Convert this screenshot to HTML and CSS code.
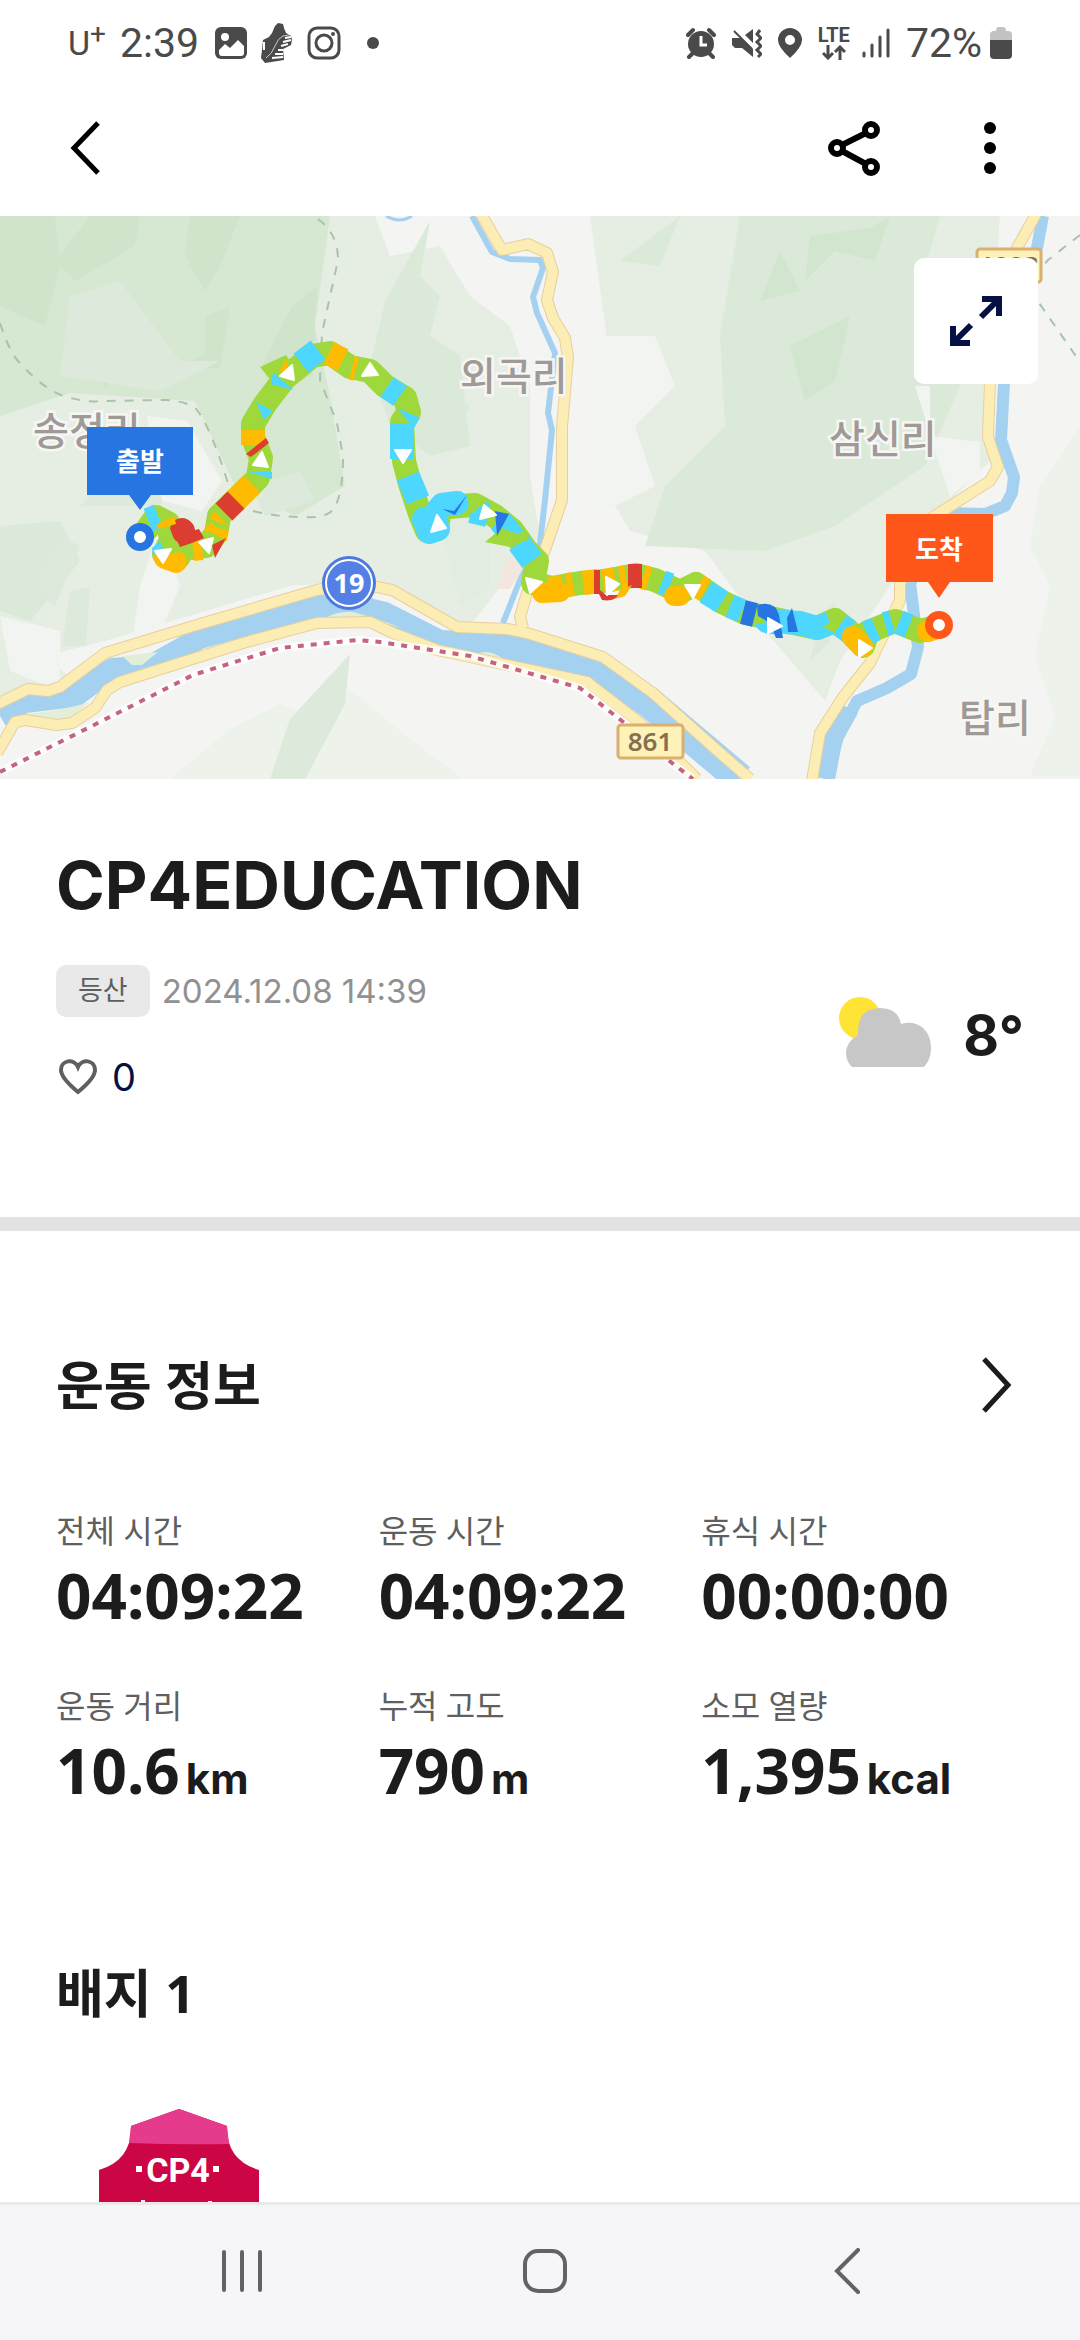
FILE: index.html
```html
<!DOCTYPE html>
<html lang="ko">
<head>
    <meta charset="UTF-8">
    <meta name="viewport" content="width=device-width, initial-scale=1.0">
    <title>CP4EDUCATION</title>
    <link rel="stylesheet" href="styles.css">
</head>
<body>
    <div class="status-bar">
        <div class="status-left">
            <span class="carrier">U<sup>+</sup></span>
            <span class="clock">2:39</span>
            <svg class="ic-photo" width="32" height="32" viewBox="0 0 32 32">
                <rect width="32" height="32" rx="6" fill="#4a4a4a"/>
                <circle cx="10" cy="10" r="4" fill="#fff"/>
                <path d="M4 23l6-6 5 4 8-8 6 6v7q0 3-3 3H7q-3 0-3-3z" fill="#fff"/>
            </svg>
            <svg class="ic-shoe" width="32" height="40" viewBox="0 0 32 40">
                <path d="M14 3l3-3 5 1 1 4 2 5 5 3 1 4-1 5-8 4 1 11-19 3-4-5 1-8 1-10 6-3 3-4z" fill="#4a4a4a"/>
                <path d="M3 19v8M24 15l6-1M22 19l8-2M20 23l7-2M17 27h5M14 31h8M11 35l11-1" fill="none" stroke="#fff" stroke-width="2"/>
                <path d="M5 35q6-4 9-12t8-10l6-1" fill="none" stroke="#ccc"/>
            </svg>
            <svg width="34" height="34" viewBox="0 0 34 34" fill="none" stroke="#4a4a4a" stroke-width="3">
                <rect x="2" y="2" width="30" height="30" rx="8"/>
                <circle cx="17" cy="17" r="8"/>
                <circle cx="26" cy="8" r="2" fill="#4a4a4a" stroke="none"/>
            </svg>
            <span class="more-dot"></span>
        </div>
        <div class="status-right">
            <svg width="30" height="32" viewBox="0 0 30 32">
                <circle cx="15" cy="17" r="13" fill="#4a4a4a"/>
                <path d="M2 8l5-5M28 8l-5-5M3 30l4-4M27 30l-4-4" stroke="#4a4a4a" stroke-width="4" stroke-linecap="round"/>
                <path d="M15 9v9h6" fill="none" stroke="#fff" stroke-width="3"/>
            </svg>
            <svg width="30" height="32" viewBox="0 0 30 32">
                <path d="M0 11h9l12 11v8L10 21H3l-3-3zM13 8l8-6v14z" fill="#4a4a4a"/>
                <path d="M2 4l18 18" stroke="#4a4a4a" stroke-width="2"/>
                <path d="M28 3l-3 4 4 4-4 4 4 4-4 4 4 4-3 3" fill="none" stroke="#4a4a4a" stroke-width="3"/>
            </svg>
            <svg width="24" height="30" viewBox="0 0 24 30">
                <path fill="#4a4a4a" fill-rule="evenodd" d="M12 0a12 12 0 0 1 12 12q0 7-12 18Q0 19 0 12A12 12 0 0 1 12 0zm0 7a5 5 0 1 0 0 10 5 5 0 0 0 0-10z"/>
            </svg>
            <span class="lte">LTE
                <svg width="24" height="15" viewBox="0 0 24 15" fill="none" stroke="#4a4a4a" stroke-width="3">
                    <path d="M6 0v13M1 8l5 5 5-5M18 15V2M13 7l5-5 5 5"/>
                </svg>
            </span>
            <svg class="ic-signal" width="28" height="30" viewBox="0 0 28 30" stroke="#4a4a4a" stroke-width="3" stroke-linecap="round">
                <path d="M2 25v3M10 17v11M18 9v19M26 2v26"/>
            </svg>
            <span class="battery-text">72%</span>
            <svg width="22" height="32" viewBox="0 0 22 32">
                <path d="M0 14V8q0-4 4-4h2q0-4 3-4h4q3 0 3 4h2q4 0 4 4v6z" fill="#c2c2c2"/>
                <path d="M0 13h22v15q0 4-4 4H4q-4 0-4-4z" fill="#4a4a4a"/>
            </svg>
        </div>
    </div>

    <header class="app-bar">
        <button class="icon-btn" aria-label="뒤로">
            <svg width="32" height="56" viewBox="0 0 32 56" fill="none" stroke="#000" stroke-width="5"><path d="M28 3L4 28l24 25"/></svg>
        </button>
        <div class="app-actions">
            <button class="icon-btn" aria-label="공유">
                <svg width="52" height="56" viewBox="0 0 52 56" fill="none" stroke="#000" stroke-width="6">
                    <circle cx="9" cy="28" r="6"/><circle cx="43" cy="10" r="6"/><circle cx="43" cy="47" r="6"/>
                    <path d="M14 25l24-12M14 31l24 13"/>
                </svg>
            </button>
            <button class="icon-btn" aria-label="더보기">
                <svg width="12" height="54" viewBox="0 0 12 54"><circle cx="6" cy="7" r="6"/><circle cx="6" cy="27" r="6"/><circle cx="6" cy="47" r="6"/></svg>
            </button>
        </div>
    </header>

    <main>
        <div class="map">
            <svg class="map-canvas" viewBox="0 0 1080 563">
                <rect width="1080" height="563" fill="#f4f5f3"/>

                <!-- 산 / 녹지 -->
                <g fill="#e6eee4">
                    <path d="M0 0H375l15 40 50-10 30 50 40 30 20 60 0 90 10 60-70 90-95-45-85 5-185 55-60 15L80 470 0 485z"/>
                    <path d="M590 0H1000l-10 160 5 80-45 45-50 70-60 90-15 40-60-70-60-80-75-20-30-50 10-120z"/>
                </g>
                <path d="M170 563l60-50 50-25 40 15 30-30 60 50 80 60zM1080 210l-40 60-10 60 20 40-15 70 20 60-25 60h55z" fill="#edf2eb"/>
                <path d="M0 0h330l-15 110 15 70 15 90-50 30-60-30-40-85-125-8L0 200z" fill="#d6e7d2"/>
                <g fill="#dbe9d8">
                    <path d="M430 5l-45 80-15 65 20 60 40 30 40-10-10-90-30-20 10-40-20-20z"/>
                    <path d="M740 0h200l-20 70 40 100-35 80-90 60-70 25-120-5 20-60 60-60-5-90z"/>
                    <path d="M620 45l60-45-20 50zM440 195l30-8-10 35-20 8zM0 310l60-5 20 40-50 60-30-10z"/>
                </g>
                <path d="M440 280h50v90l-30 20-15-60z" fill="#e2ece0"/>
                <g fill="#cfe4ca">
                    <path d="M0 0h55l5 50-15 60L0 90zM90 0h50l-5 30-60 35-20-20zM190 0h50l-20 50-15 25-20-35zM205 100l25-8-10 60h-40l25-15zM105 110l25-8 5 30-30 40-12-30zM262 150l30-60 25-20-5 90-40 20z"/>
                </g>
                <g fill="#d2e5ce">
                    <path d="M810 20l60-8 20-12-15 45-40-10-30 30zM760 85l40-10-20-40zM790 130l60-30-15 65-30 20z"/>
                </g>
                <g fill="#dde9da">
                    <path d="M250 270l50-15 15 30-50 15zM270 563l20-60 60-65-5 50-40 75zM80 290l50-50 60 10-30 40zM60 320l20 10-25 60-25-20z"/>
                    <path d="M70 80l50-15 60 80 40 0-60 30-100-15zM820 400l15-15-5 40-20 20zM70 375l20-5-4 60H62z"/>
                </g>
                <path d="M147 200l40 5 35 60-20 30-40-10zM140 370l20-60 20 60-25 60-25 10zM585 120h70l20 50-40 40 20 60-60 30-10-20zM0 400l60 15 0 60-50-20zM915 170l15 0 0 50 50 6 0 30-30 25z" fill="#f2f4f1"/>
                <path d="M504 350l13-15 8 15-15 23h-12z" fill="#f3e6df"/>

                <!-- 강 -->
                <g fill="none" stroke="#a5d1f1" stroke-linejoin="round">
                    <path d="M0 500L25 486 75 480 112 453 150 450 200 422 317 390 360 391 385 397 440 425 520 430" stroke-width="22"/>
                    <path d="M500 428L600 452 650 487 720 546 740 563" stroke-width="31"/>
                    <path d="M472 0L492 36 510 43 540 44 543 52 533 81 537 97 555 137 548 197 552 214 545 284 540 327 520 364 503 407" stroke-width="6"/>
                    <path d="M386 0q14 8 26 0" stroke-width="3"/>
                    <path d="M1043 0L1037 32 1005 120 1004 167 1001 224 1014 261 1012 277 1005 290 985 298 950 297 910 367 918 431 911 458 887 472 857 485 838 521 825 563" stroke-width="12"/>
                    <path d="M850 493L834 521 826 563" stroke-width="18"/>
                </g>
                <path d="M122 440l36-4-16 13-10 0zM25 498q40-4 65-12l-25 20zM325 402q20-10 35-4l20 6 22 8-30-8zM477 438q12-6 28 6z" fill="#e2eed8"/>

                <!-- 도로 -->
                <g fill="none" stroke-linejoin="round">
                    <g stroke="#e8cf9d" stroke-width="12">
                        <path d="M-5 489L28 473 48 475 60 471 105 437 200 408 317 374 349 367 377 371 392 374 457 411 507 413 527 417 603 441 653 477 720 537 750 563"/>
                        <path d="M-3 537L15 506 25 504 57 509 72 507 95 492 107 474 120 466 243 427 317 407 370 406 393 417 437 434 493 446 587 466 640 507 697 563"/>
                        <path d="M481 -2L502 34 528 28 547 37 553 56 547 84 553 102 565 122 568 141 562 211 562 284 545 334 527 377 520 401 523 412"/>
                        <path d="M1036 -2L1017 32 995 90 990 167 988 221 998 251 990 265 933 301 900 367 900 384 870 447 843 481 820 517 812 565"/>
                    </g>
                    <g stroke="#fbedb3" stroke-width="10">
                        <path d="M-5 489L28 473 48 475 60 471 105 437 200 408 317 374 349 367 377 371 392 374 457 411 507 413 527 417 603 441 653 477 720 537 750 563"/>
                        <path d="M-3 537L15 506 25 504 57 509 72 507 95 492 107 474 120 466 243 427 317 407 370 406 393 417 437 434 493 446 587 466 640 507 697 563"/>
                        <path d="M481 -2L502 34 528 28 547 37 553 56 547 84 553 102 565 122 568 141 562 211 562 284 545 334 527 377 520 401 523 412"/>
                        <path d="M1036 -2L1017 32 995 90 990 167 988 221 998 251 990 265 933 301 900 367 900 384 870 447 843 481 820 517 812 565"/>
                    </g>
                    <path d="M0 556L80 516 193 459 280 432 357 424 380 426 470 440 580 472 627 509 672 547 693 563" stroke="#fff" stroke-opacity=".8" stroke-width="8"/>
                    <path d="M0 556L80 516 193 459 280 432 357 424 380 426 470 440 580 472 627 509 672 547 693 563" stroke="#c46482" stroke-width="4" stroke-dasharray="6 7"/>
                    <path d="M0 107Q10 138 20 147 45 175 67 181T100 185L167 184Q190 186 197 194 212 214 230 274M253 295Q278 301 300 301 325 303 333 294 343 280 343 241L337 207 320 164 322 117 338 44Q338 14 313 0M1080 19L1048 44 1035 60 1037 84 1080 146" stroke="#a9c2ab" stroke-width="2" stroke-dasharray="9 9"/>
                </g>

                <!-- 지명 -->
                <g class="place">
                    <text x="33" y="229">송정리</text>
                    <text x="460" y="174">외곡리</text>
                    <text x="829" y="237">삼신리</text>
                    <text x="959" y="516">탑리</text>
                </g>
                <g class="road-no">
                    <rect x="618" y="509" width="65" height="33" rx="3"/>
                    <text x="650" y="535">861</text>
                    <rect x="977" y="33" width="64" height="33" rx="3"/>
                    <text x="1009" y="59">1023</text>
                </g>
                <circle cx="349" cy="367" r="27" fill="#4d78dd"/>
                <circle cx="349" cy="367" r="23" fill="#5480e6" stroke="#fff" stroke-width="2"/>
                <text class="route-no" x="349" y="377">19</text>

                <!-- 이동 경로: 속도별 색상 -->
                <g fill="none" stroke-width="24" stroke-linejoin="round">
                    <path stroke="#9fd83a" stroke-linecap="round" d="M148 312L156 301 168 307 172 322 164 338 178 342 188 325 194 332 206 330 216 318 219 300 258 262 261 242 253 222 253 208 265 188 285 162 312 140 330 137 350 151 370 155 385 170 405 182 409 196 402 206 404 245 410 268 420 298 427 315 437 313 440 292 460 290 475 289 495 300 512 314 527 335 537 345 533 367 552 372 580 367 605 365 636 359 655 364 680 376 696 368 722 386 745 397 770 402 817 412 835 404 852 418 863 430 868 416 895 405 920 415 936 411"/>
                    <g stroke="#4dd7ff">
                        <path d="M148 304L158 300M301 147L318 134M387 171L400 180M402 207V243M408 260L418 284"/>
                        <path d="M424 303L429 316 438 313 433 300 442 289 457 287" stroke-linecap="round"/>
                        <path d="M471 295L488 299M500 305L514 322M519 327L532 345M662 366L670 369M706 376L722 386M730 390L742 395"/>
                        <path d="M765 403L785 406 800 407 817 412 830 407M840 409L849 415M867 417L876 413M885 408L892 406M899 406L909 410"/>
                    </g>
                    <g stroke="#ffbb00">
                        <path d="M165 342L176 346" stroke-width="22" stroke-linecap="round"/>
                        <path d="M193 333L202 332M216 317L217 312M232 288L252 268M253 229V214M329 137L343 144M352 152L356 153M548 373L562 372M567 369L573 368M583 367L598 365M603 365L615 363M620 362L626 361M643 361L649 363M698 370L705 374"/>
                        <path d="M542 377L560 376M674 380L680 380" stroke-width="20" stroke-linecap="round"/>
                        <path d="M853 421L862 430M928 415L937 412" stroke-width="22" stroke-linecap="round"/>
                    </g>
                    <g stroke="#db3e30">
                        <path d="M182 314L183 315" stroke-linecap="round"/>
                        <path d="M224 296L236 284M594 366H600M628 360L642 360"/>
                    </g>
                    <path stroke="#2775e2" d="M743 396L755 399"/>
                </g>
                <path fill="#9fd83a" d="M260 151l26-12 16 24-22 12zM485 326l17-14 28 11-20 8zM467 280q10-4 18 7l-14 11zM823 411l20-14-8 20zM157 316l12-6 10 26-15 4z"/>
                <path fill="#4dd7ff" d="M152 332l8-7 4 10-11 4zM256 186l17 9-9 9zM273 156l20 18-22-6zM249 256h23v7zM397 192l23 10-6 10zM755 408l24-2v12q-20 2-24-10z"/>
                <path fill="#ffbb00" d="M156 309l18-9 2 8-17 5zM207 314l20 11v-6l-17-13zM210 303l18 7-14-15zM279 155l8-12v12zM620 374l12-5-7 11-10 3zM602 356q9-3 14 1l-6 6z"/>
                <path fill="#db3e30" d="M175 320l24-7 5 9-12 5-12 4zM246 238l20-16 3 5-18 14zM212 329l14-7-11 20zM595 370l11 9h12q-3 7-16 5z"/>
                <path fill="#2775e2" d="M495 295l14 3-12 22zM442 293l12 2 13-16-12 20zM757 389q18-5 22 10l4 23h-7l-6-15-12-7zM787 402l5-10 6 24h-10z"/>
                <g fill="#fff" stroke="#fff" stroke-width="2" stroke-linejoin="round">
                    <path d="M155 335l16-2-8 14zM199 326l14-4-4 15zM253 249l9-13 6 15zM280 160l12-11 2 15zM362 160l8-13 8 12zM395 234h16l-8 13zM431 316l6-17 9 13zM484 289l12 10-16 4zM526 362l16 4-12 11zM606 361l13 7-12 11zM685 369h15l-7 13zM768 402l14 8-14 7zM859 424l13 8-13 9z"/>
                </g>

                <!-- 출발 / 도착 -->
                <g class="flag">
                    <path d="M87 211h106v68h-42l-11 15-11-15H87z" fill="#2775e2"/>
                    <text x="140" y="255">출발</text>
                    <circle cx="140" cy="321" r="10" fill="#fff" stroke="#2775e2" stroke-width="8"/>
                    <path d="M886 298h107v68h-43l-11 16-11-16h-42z" fill="#ff5719"/>
                    <text x="939" y="343">도착</text>
                    <circle cx="939" cy="409" r="10" fill="#fff" stroke="#ff5719" stroke-width="8"/>
                </g>
            </svg>
            <button class="expand-btn" aria-label="지도 확대">
                <svg width="52" height="52" viewBox="0 0 52 52" fill="none" stroke="#051044" stroke-width="6">
                    <path d="M32 4h17v17M48 5L31 22M20 48H3V31M4 47l17-17"/>
                </svg>
            </button>
        </div>

        <section class="summary">
            <h1>CP4EDUCATION</h1>
            <div class="summary-row">
                <div class="summary-info">
                    <div class="meta">
                        <span class="tag">등산</span>
                        <time datetime="2024-12-08T14:39">2024.12.08 14:39</time>
                    </div>
                    <button class="like">
                        <svg width="40" height="38" viewBox="0 0 40 38" fill="none" stroke="#5f5f5f" stroke-width="4"><path d="M20 34Q3 20 3 12C3 2 16 0 20 9 24 0 37 2 37 12q0 8-17 22z"/></svg>
                        <span>0</span>
                    </button>
                </div>
                <div class="weather">
                    <svg width="92" height="70" viewBox="0 0 92 70">
                        <circle cx="21" cy="21" r="21" fill="#ffe436"/>
                        <path d="M13 70Q7 64 7 56q0-11 12-18-1-27 22-27 18 0 21 16 6-2 12-1 18 5 18 26 0 10-7 18z" fill="#c7c7c7"/>
                    </svg>
                    <strong>8°</strong>
                </div>
            </div>
        </section>

        <section class="workout">
            <div class="section-head">
                <h2>운동 정보</h2>
                <button class="icon-btn" aria-label="운동 정보 보기">
                    <svg width="32" height="56" viewBox="0 0 32 56" fill="none" stroke="#1c1c1c" stroke-width="5"><path d="M4 2l24 26L4 54"/></svg>
                </button>
            </div>
            <dl class="stats">
                <div><dt>전체 시간</dt><dd>04:09:22</dd></div>
                <div><dt>운동 시간</dt><dd>04:09:22</dd></div>
                <div><dt>휴식 시간</dt><dd>00:00:00</dd></div>
                <div><dt>운동 거리</dt><dd>10.6<small>km</small></dd></div>
                <div><dt>누적 고도</dt><dd>790<small>m</small></dd></div>
                <div><dt>소모 열량</dt><dd>1,395<small>kcal</small></dd></div>
            </dl>
        </section>

        <section class="badges">
            <h2>배지 1</h2>
            <svg class="badge" width="160" height="180" viewBox="0 0 160 180">
                <path d="M80 0l48 17q-1 34 32 44v70q-33 10-32 35l-48 14-48-14q1-25-32-35V61q33-10 32-44z" fill="#cc0645"/>
                <path d="M80 0l48 17 2 18q-50 1-100-1l2-17z" fill="#e63b8c"/>
                <text x="79" y="73">CP4</text>
                <path d="M37 57h6v6h-6zM114 57h6v6h-6zM15 93h15v4H15zM42 91h4v6h-4zM109 92h4v5h-4z" fill="#fff"/>
            </svg>
        </section>
    </main>

    <nav class="nav-bar">
        <button class="icon-btn" aria-label="최근 앱">
            <svg width="44" height="46" viewBox="0 0 44 46" stroke="#636363" stroke-width="4" stroke-linecap="round"><path d="M4 4v38M22 4v38M40 4v38"/></svg>
        </button>
        <button class="icon-btn" aria-label="홈">
            <svg width="46" height="46" viewBox="0 0 46 46" fill="none" stroke="#636363" stroke-width="4"><rect x="3" y="3" width="40" height="40" rx="13"/></svg>
        </button>
        <button class="icon-btn" aria-label="이전">
            <svg width="46" height="46" viewBox="0 0 46 46" fill="none" stroke="#636363" stroke-width="4" stroke-linecap="round"><path d="M33 2L12 23l21 21"/></svg>
        </button>
    </nav>
</body>
</html>
```
FILE: styles.css
```css
* {
    box-sizing: border-box;
}
body {
    margin: 0;
    height: 100vh;
    display: flex;
    flex-direction: column;
    background-color: #fff;
    color: #1c1c1c;
    font-family: "Noto Sans", "Noto Sans CJK KR", sans-serif;
}
h1, h2, dl, dd {
    margin: 0;
}
svg {
    display: block;
    flex: none;
}
button {
    padding: 0;
    border: none;
    background: none;
    cursor: pointer;
}

/* 상태 표시줄 */
.status-bar {
    display: flex;
    justify-content: space-between;
    align-items: center;
    flex: none;
    height: 86px;
    padding: 0 68px;
    color: #4a4a4a;
    font-family: Roboto, sans-serif;
    font-size: 41px;
}
.status-left,
.status-right {
    display: flex;
    align-items: center;
    gap: 16px;
}
.status-left {
    gap: 14px;
}
.carrier {
    font-size: 34px;
}
.carrier sup {
    font-size: 28px;
    line-height: 0;
}
.ic-photo {
    margin-left: 2px;
}
.more-dot {
    width: 12px;
    height: 12px;
    margin-left: 12px;
    border-radius: 50%;
    background-color: #4a4a4a;
}
.lte {
    display: flex;
    flex-direction: column;
    align-items: center;
    gap: 2px;
    font-size: 20px;
    font-weight: 700;
    line-height: 16px;
}
.ic-signal {
    margin-left: -4px;
}
.battery-text {
    margin-right: -8px;
}

/* 상단 바 */
.app-bar {
    display: flex;
    justify-content: space-between;
    align-items: center;
    flex: none;
    height: 130px;
    padding: 0 84px 6px 70px;
}
.app-actions {
    display: flex;
    align-items: center;
    gap: 104px;
}

main {
    flex: 1;
    min-height: 0;
    overflow: hidden;
}

/* 지도 */
.map {
    position: relative;
}
.map-canvas {
    width: 100%;
}
.place {
    fill: #a09a97;
    stroke: #f6f7f5;
    stroke-width: 5px;
    paint-order: stroke;
    font: 500 39px "Noto Sans CJK KR", sans-serif;
}
.road-no rect {
    fill: #fff2b8;
    stroke: #d9b06f;
    stroke-width: 3px;
}
.road-no text {
    fill: #84704f;
    font-size: 26px;
    font-weight: 600;
    text-anchor: middle;
}
.route-no {
    fill: #fff;
    font-size: 27px;
    font-weight: 700;
    text-anchor: middle;
}
.flag text {
    fill: #fff;
    font: 700 26px "Noto Sans CJK KR", sans-serif;
    text-anchor: middle;
}
.expand-btn {
    position: absolute;
    top: 42px;
    right: 42px;
    display: flex;
    align-items: center;
    justify-content: center;
    width: 124px;
    height: 126px;
    border-radius: 10px;
    background-color: #fff;
}

/* 기록 요약 */
.summary {
    padding: 66px 56px 120px;
    border-bottom: 14px solid #e2e2e2;
    font-family: Inter, "Noto Sans CJK KR", sans-serif;
}
h1 {
    margin-bottom: 40px;
    font-size: 66px;
    font-weight: 700;
    line-height: 80px;
}
.summary-row {
    display: flex;
    justify-content: space-between;
    align-items: center;
}
.meta {
    display: flex;
    align-items: center;
    gap: 12px;
    margin-bottom: 40px;
    color: #919191;
    font-size: 33px;
}
.tag {
    padding: 0 22px;
    border-radius: 10px;
    background-color: #e9e9e9;
    color: #5f5f5f;
    font-size: 27px;
    line-height: 52px;
}
.like {
    display: flex;
    align-items: center;
    gap: 14px;
    padding-left: 2px;
    color: #051044;
    font-family: inherit;
    font-size: 38px;
    line-height: 40px;
}
.weather {
    display: flex;
    align-items: flex-end;
    gap: 32px;
    padding-top: 2px;
    font-size: 55px;
    line-height: 64px;
}

/* 운동 정보 */
h2 {
    font-size: 52px;
    font-weight: 700;
    line-height: 72px;
}
.workout {
    padding: 118px 56px 0;
}
.section-head {
    display: flex;
    justify-content: space-between;
    align-items: center;
    padding-right: 12px;
}
.stats {
    display: grid;
    grid-template-columns: repeat(3, 1fr);
    row-gap: 51px;
    margin-top: 86px;
}
dt {
    color: #5f5f5f;
    font-size: 32px;
    line-height: 48px;
}
dd {
    margin-top: 4px;
    font-size: 62px;
    font-weight: 700;
    line-height: 72px;
}
dd small {
    margin-left: 6px;
    font-family: Inter, sans-serif;
    font-size: 42px;
    font-weight: 700;
}

/* 배지 */
.badges {
    padding: 142px 56px 0;
}
.badge {
    margin: 80px 0 0 43px;
}
.badge text {
    fill: #fff;
    font: 700 34px Roboto, sans-serif;
    text-anchor: middle;
}

/* 하단 내비게이션 */
.nav-bar {
    display: flex;
    justify-content: space-between;
    align-items: center;
    flex: none;
    height: 138px;
    padding: 0 209px 4px 220px;
    border-top: 3px solid #e9e9e9;
    background-color: #f6f6f8;
}
```
